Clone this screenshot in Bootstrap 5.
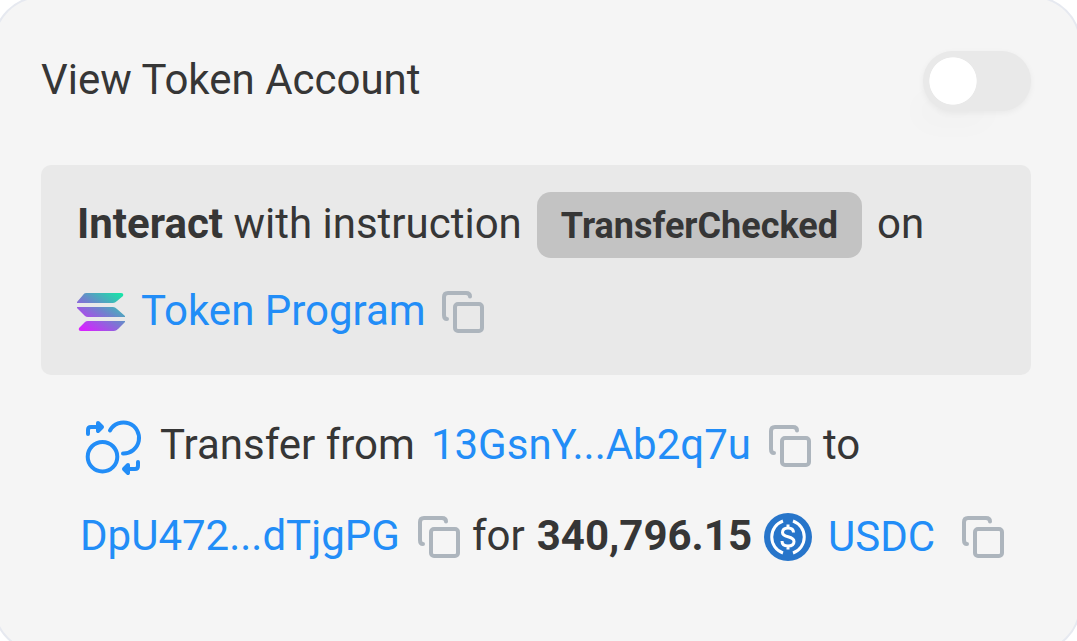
<!DOCTYPE html>
<html lang="en">
<head>
<meta charset="utf-8">
<meta name="viewport" content="width=device-width, initial-scale=1">
<title>Token Account</title>
<link href="https://cdn.jsdelivr.net/npm/bootstrap@5.3.0/dist/css/bootstrap.min.css" rel="stylesheet">
<style>
  body { font-family: Roboto, "Liberation Sans", sans-serif; font-size: 42px; line-height: 60px; color: #363636; background: #fff; overflow: hidden; }
  .sheet { margin: -4px -4px 0 -7px; padding: 53px 48px 48px 46px; min-height: calc(100vh + 16px); background: #f5f5f5; border: 2px solid #e6e9f0; border-radius: 48px; }
  .toggle-row { height: 60px; margin-bottom: 54px; }
  .form-switch .form-check-input.toggle-input { width: 108px; height: 60px; margin: 0; border: 0; background-color: #e9e9e9; background-image: radial-gradient(circle closest-side, #fff 97%, transparent 100%); background-size: 48px 48px; background-position: 6px center; box-shadow: 0 2px 6px rgba(0,0,0,.05), -24px 30px 30px -16px rgba(0,0,0,.02); }
  .form-switch .form-check-input.toggle-input:checked { background-color: #228df7; background-position: 54px center; }
  .panel { background: #e9e9e9; border-radius: 10px; padding: 27px 36px 33px; }
  .chip { background: #c3c3c3; border-radius: 14px; font-size: 36px; line-height: 64px; padding: 2px 24px 0; margin: 0 15px; }
  .line { height: 66px; }
  .line-two { height: 60px; }
  .raised { padding-bottom: 3px; }
  .actions { padding: 41px 27px 0 39px; }
  .gap-s { margin-left: 12px; }
  .gap-m { margin-left: 18px; }
  .gap-l { margin-left: 27px; }
  .next-line { margin-top: 31px; }
  a { color: #228df7; text-decoration: none; }
  .copy-btn { border: 0; background: none; padding: 0; width: 42px; height: 42px; display: flex; color: #adb5bd; }
  svg { display: block; flex: none; }
</style>
</head>
<body>
<svg width="0" height="0" class="position-absolute" aria-hidden="true">
  <symbol id="copy" viewBox="0 0 42 42"><g fill="none" stroke="currentColor" stroke-width="4" stroke-linecap="round"><rect x="13" y="13" width="27" height="27" rx="3"/><path d="M5 28Q2 28 2 24V6Q2 2 6 2H24Q28 2 28 5.500"/></g></symbol>
</svg>
<main class="sheet">
  <div class="toggle-row form-check form-switch d-flex align-items-center justify-content-between p-0">
    <label for="view" class="raised">View Token Account</label>
    <input class="form-check-input toggle-input" type="checkbox" role="switch" id="view">
  </div>
  <section class="panel">
    <div class="line d-flex align-items-center">
      <span class="raised"><b>Interact</b> with instruction</span>
      <b class="chip">TransferChecked</b>
      <span class="raised">on</span>
    </div>
    <div class="line-two d-flex align-items-center mt-4">
      <svg width="48" height="38" viewBox="0 0 48 38" aria-hidden="true">
        <defs><linearGradient id="sol" gradientUnits="userSpaceOnUse" x1="40" y1="-3" x2="12" y2="40"><stop stop-color="#14e8a6"/><stop offset=".5" stop-color="#7082cd"/><stop offset="1" stop-color="#d624ff"/></linearGradient></defs>
        <path fill="url(#sol)" d="M9 0H44Q47 0 46 3L40 8Q38 10 36 10H0V9L6 2Q7 0 9 0ZM0 14H36Q38 14 40 16L48 23V24H11Q9 24 8 23L0 15ZM11 28H48V29L41 36Q39 38 37 38H4Q1 38 2 35L8 29Q9 28 11 28Z"/>
      </svg>
      <a href="#" class="ms-3 raised">Token Program</a>
      <button class="copy-btn ms-3" aria-label="Copy program address"><svg width="42" height="42"><use href="#copy"/></svg></button>
    </div>
  </section>
  <section class="actions">
    <div class="line-two d-flex align-items-center">
      <svg class="ms-1" width="58" height="60" viewBox="-1 -4 58 60" fill="none" stroke="#228df7" stroke-width="4" stroke-linecap="round" stroke-linejoin="round" aria-hidden="true">
        <circle cx="17.500" cy="36.700" r="14.800"/><path d="M25 10.500A15.500 15.500 0 1 1 38 33.500M3 14V10Q3 7 6 7H16"/><path d="M13 3L17 7L13 11ZM43 45L39 49L43 53Z" fill="#228df7"/><path d="M53 42V46Q53 49 50 49H40"/>
      </svg>
      <span class="gap-m raised">Transfer from</span>
      <a href="#" class="ms-3 raised">13GsnY...Ab2q7u</a>
      <button class="copy-btn gap-m" aria-label="Copy sender"><svg width="42" height="42"><use href="#copy"/></svg></button>
      <span class="gap-s raised">to</span>
    </div>
    <div class="next-line line-two d-flex align-items-center">
      <a href="#" class="raised">DpU472...dTjgPG</a>
      <button class="copy-btn gap-m" aria-label="Copy recipient"><svg width="42" height="42"><use href="#copy"/></svg></button>
      <span class="gap-s raised">for</span>
      <b class="gap-s raised">340,796.15</b>
      <svg class="gap-s" width="48" height="48" viewBox="0 0 48 48" aria-hidden="true">
        <circle cx="24" cy="24" r="24" fill="#2775ca"/>
        <g fill="none" stroke="#fff" stroke-width="3"><path d="M19 8A17 17 0 0 0 19 40M29 8A17 17 0 0 1 29 40"/><path d="M29.500 19.500Q29.500 15 24 15Q18.500 15 18.500 19.500C18.500 25.500 30 22 30 28.500Q30 33 24 33Q18 33 18 28M24 11.500V16M24 32V36.500"/></g>
      </svg>
      <a href="#" class="ms-3">USDC</a>
      <button class="copy-btn gap-l" aria-label="Copy token"><svg width="42" height="42"><use href="#copy"/></svg></button>
    </div>
  </section>
</main>
<script src="https://cdn.jsdelivr.net/npm/bootstrap@5.3.0/dist/js/bootstrap.bundle.min.js"></script>
</body>
</html>
